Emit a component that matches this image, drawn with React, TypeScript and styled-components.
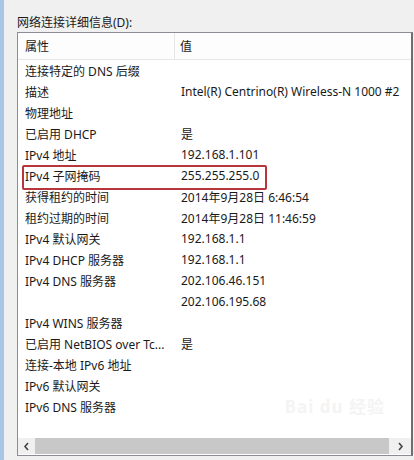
import React, { FC } from "react";
import styled, { createGlobalStyle } from "styled-components";

const GlobalStyle = createGlobalStyle`
    html, body {
        margin: 0;
        padding: 0;
        background: #f0f0f0;
    }
    * {
        box-sizing: border-box;
    }
`;

const Page = styled.div`
    width: 414px;
    height: 460px;
    display: flex;
    overflow: hidden;
    font-family: "Noto Sans", "Noto Sans CJK SC", sans-serif;
    font-size: 12px;
    color: #1a1a1a;
`;

const Strip = styled.div`
    width: 4px;
    background: #aac6e6;
`;

const Main = styled.div`
    flex: 1;
    display: flex;
    flex-direction: column;
    padding: 14px 1px 4px 13px;
`;

const Caption = styled.div`
    height: 18px;
    line-height: 17px;
`;

const ListBox = styled.div`
    position: relative;
    flex: 1;
    display: flex;
    flex-direction: column;
    background: #ffffff;
    border: 1px solid #8a8e94;
    border-right: 2px solid #6e6e6e;
`;

const Header = styled.div`
    height: 27px;
    display: grid;
    grid-template-columns: 157px 1fr;
    background: #fdfdfd;
    border-bottom: 1px solid #e6e6e6;
`;

const HeaderCell = styled.div<{ $divider?: boolean }>`
    display: flex;
    align-items: center;
    padding-left: ${(p) => (p.$divider ? "7px" : "5px")};
    border-right: ${(p) => (p.$divider ? "1px solid #e5e5e5" : "none")};
`;

const Rows = styled.div`
    flex: 1;
`;

const Row = styled.div`
    position: relative;
    height: 21px;
    display: grid;
    grid-template-columns: 156px 1fr;
    align-items: center;
`;

const Cell = styled.div`
    padding-left: 7px;
    white-space: nowrap;
    overflow: hidden;
`;

const Mark = styled.div`
    position: absolute;
    left: 4px;
    top: 0;
    width: 245px;
    height: 25px;
    border: 2px solid #b8353c;
    border-radius: 2px;
`;

const ScrollBar = styled.div`
    height: 16px;
    margin-bottom: 1px;
    display: flex;
    align-items: stretch;
    background: #f0f0f0;
`;

const ArrowButton = styled.div<{ $wide?: boolean }>`
    width: ${(p) => (p.$wide ? "22px" : "17px")};
    display: flex;
    align-items: center;
    justify-content: center;
`;

const Track = styled.div`
    flex: 1;
    background: #c8c8c8;
`;

const Watermark = styled.div`
    position: absolute;
    right: 26px;
    bottom: 22px;
    display: flex;
    flex-direction: column;
    align-items: center;
    pointer-events: none;
`;

const WaterLogo = styled.div`
    font-size: 17px;
    font-weight: 700;
    letter-spacing: 1px;
    line-height: 18px;
    color: #f4f4f4;
`;

const WaterUrl = styled.div`
    font-size: 11px;
    line-height: 12px;
    color: rgba(255, 255, 255, 0.8);
    margin-top: 5px;
`;

const Chevron: FC<{ dir: "left" | "right" }> = ({ dir }) => (
    <svg width="7" height="9" viewBox="0 0 7 9">
        <path
            d={dir === "left" ? "M5 1 L2 4.5 L5 8" : "M2 1 L5 4.5 L2 8"}
            fill="none"
            stroke="#444"
            strokeWidth="1.6"
        />
    </svg>
);

const rows: [string, string][] = [
    ["连接特定的 DNS 后缀", ""],
    ["描述", "Intel(R) Centrino(R) Wireless-N 1000 #2"],
    ["物理地址", ""],
    ["已启用 DHCP", "是"],
    ["IPv4 地址", "192.168.1.101"],
    ["IPv4 子网掩码", "255.255.255.0"],
    ["获得租约的时间", "2014年9月28日 6:46:54"],
    ["租约过期的时间", "2014年9月28日 11:46:59"],
    ["IPv4 默认网关", "192.168.1.1"],
    ["IPv4 DHCP 服务器", "192.168.1.1"],
    ["IPv4 DNS 服务器", "202.106.46.151"],
    ["", "202.106.195.68"],
    ["IPv4 WINS 服务器", ""],
    ["已启用 NetBIOS over Tc...", "是"],
    ["连接-本地 IPv6 地址", ""],
    ["IPv6 默认网关", ""],
    ["IPv6 DNS 服务器", ""],
];

const App: FC = () => (
    <>
        <GlobalStyle />
        <Page>
            <Strip />
            <Main>
                <Caption>网络连接详细信息(D):</Caption>
                <ListBox>
                    <Header>
                        <HeaderCell $divider>属性</HeaderCell>
                        <HeaderCell>值</HeaderCell>
                    </Header>
                    <Rows>
                        {rows.map(([name, value], i) => (
                            <Row key={i}>
                                <Cell>{name}</Cell>
                                <Cell>{value}</Cell>
                                {i === 5 && <Mark />}
                            </Row>
                        ))}
                    </Rows>
                    <ScrollBar>
                        <ArrowButton>
                            <Chevron dir="left" />
                        </ArrowButton>
                        <Track />
                        <ArrowButton $wide>
                            <Chevron dir="right" />
                        </ArrowButton>
                    </ScrollBar>
                    <Watermark>
                        <WaterLogo>Bai du 经验</WaterLogo>
                        <WaterUrl>jingyan.baidu.com</WaterUrl>
                    </Watermark>
                </ListBox>
            </Main>
        </Page>
    </>
);

export default App;
